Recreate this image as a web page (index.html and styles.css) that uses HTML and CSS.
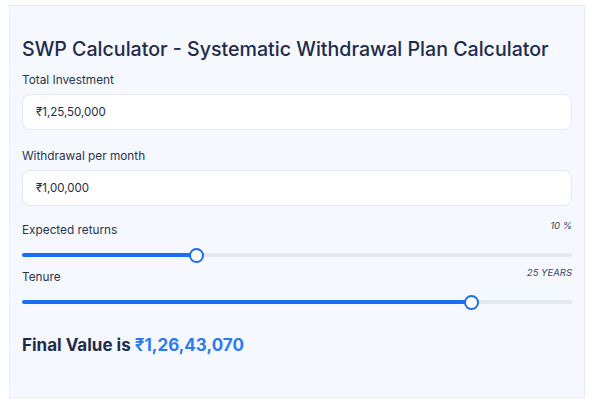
FILE: index.html
```html
<!DOCTYPE html>
<html>
<head>
<meta charset="utf-8">
<link rel="stylesheet" href="styles.css">
</head>
<body>
<div class="card">
  <h1 class="title">SWP Calculator - Systematic Withdrawal Plan Calculator</h1>
  <div class="field">
    <label class="label">Total Investment</label>
    <div class="input">₹1,25,50,000</div>
  </div>
  <div class="field">
    <label class="label">Withdrawal per month</label>
    <div class="input">₹1,00,000</div>
  </div>
  <div class="slider-field">
    <div class="slider-head"><span class="label">Expected returns</span><span class="value">10 %</span></div>
    <div class="track"><div class="fill" style="width:31.8%"></div><div class="thumb" style="left:31.8%"></div></div>
  </div>
  <div class="slider-field">
    <div class="slider-head"><span class="label">Tenure</span><span class="value">25 YEARS</span></div>
    <div class="track"><div class="fill" style="width:81.8%"></div><div class="thumb" style="left:81.8%"></div></div>
  </div>
  <div class="result">Final Value is <span class="amount">₹1,26,43,070</span></div>
</div>
</body>
</html>
```
FILE: styles.css
```css
* { box-sizing: border-box; }
body {
  margin: 0;
  background: #ffffff;
  font-family: "Inter", "Noto Sans", sans-serif;
  color: #1f2b4a;
}
.card {
  margin: 5px 0 0 9px;
  width: 576px;
  height: 393px;
  background: #f5f8fe;
  border: 1px solid #e8ecf2;
  padding: 30px 12px 0 12px;
  display: flex;
  flex-direction: column;
}
.title {
  margin: 0;
  font-size: 19.6px;
  font-weight: 500;
  line-height: 26px;
  color: #1f2b4a;
}
.field {
  display: flex;
  flex-direction: column;
  margin-top: 10px;
}
.field + .field { margin-top: 18px; }
.label {
  font-size: 11.8px;
  line-height: 16px;
  color: #2a3550;
}
.input {
  margin-top: 6px;
  height: 36px;
  background: #ffffff;
  border: 1px solid #e5e8ee;
  border-radius: 8px;
  padding: 0 13px;
  display: flex;
  align-items: center;
  font-size: 11.5px;
  color: #1f2b4a;
}
.slider-field {
  margin-top: 16px;
  display: flex;
  flex-direction: column;
}
.slider-field + .slider-field { margin-top: 12px; }
.slider-head {
  display: flex;
  justify-content: space-between;
  align-items: flex-start;
}
.value {
  font-size: 9.5px;
  font-style: italic;
  line-height: 14px;
  color: #3a4560;
  margin-top: -3px;
}
.track {
  position: relative;
  margin-top: 15px;
  height: 4px;
  border-radius: 2px;
  background: #e3e7ef;
}
.fill {
  height: 4px;
  border-radius: 2px;
  background: #1b6ef3;
}
.thumb {
  position: absolute;
  top: 50%;
  width: 15px;
  height: 15px;
  margin: -7.5px 0 0 -7.5px;
  border-radius: 50%;
  background: #ffffff;
  border: 2.5px solid #1b6ef3;
}
.result {
  margin-top: 31px;
  font-size: 17px;
  font-weight: 700;
  color: #1f2b4a;
}
.amount { color: #2b7af5; }
```
